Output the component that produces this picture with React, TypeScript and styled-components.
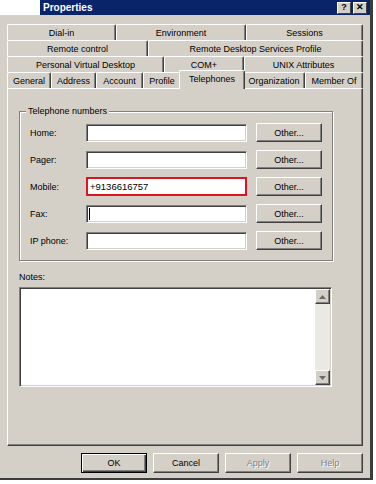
import styled, { createGlobalStyle, css } from 'styled-components';

const face = '#d4d0c8';
const shadow = '#808080';
const dark = '#404040';

const GlobalStyle = createGlobalStyle`
  html, body { margin: 0; padding: 0; background: #fff; }
  body {
    font-family: "Liberation Sans", Arial, sans-serif;
    font-size: 9px;
    color: #000;
  }
  * { box-sizing: border-box; }
`;

type TabDef = { label: string; w: number; active?: boolean };

const tabRows: TabDef[][] = [
  [
    { label: 'Dial-in', w: 109 },
    { label: 'Environment', w: 130 },
    { label: 'Sessions', w: 117 },
  ],
  [
    { label: 'Remote control', w: 141 },
    { label: 'Remote Desktop Services Profile', w: 215 },
  ],
  [
    { label: 'Personal Virtual Desktop', w: 157 },
    { label: 'COM+', w: 80 },
    { label: 'UNIX Attributes', w: 119 },
  ],
  [
    { label: 'General', w: 44 },
    { label: 'Address', w: 45 },
    { label: 'Account', w: 47 },
    { label: 'Profile', w: 38 },
    { label: 'Telephones', w: 62, active: true },
    { label: 'Organization', w: 62 },
    { label: 'Member Of', w: 58 },
  ],
];

const phones = [
  { label: 'Home:', value: '' },
  { label: 'Pager:', value: '' },
  { label: 'Mobile:', value: '+9136616757', alert: true },
  { label: 'Fax:', value: '', caret: true },
  { label: 'IP phone:', value: '' },
];

export default function App() {
  return (
    <>
      <GlobalStyle />
      <Window>
        <TitleRow>
          <Blank />
          <TitleBar>
            <Title>Properties</Title>
            <Caps>
              <CapButton>?</CapButton>
              <CapButton>✕</CapButton>
            </Caps>
          </TitleBar>
        </TitleRow>

        <Frame>
          <Tabs>
            {tabRows.map((row, i) => (
              <TabRow key={i}>
                {row.map((t) => (
                  <Tab key={t.label} $w={t.w} $active={t.active}>
                    {t.label}
                  </Tab>
                ))}
              </TabRow>
            ))}
          </Tabs>

          <Panel>
            <Group>
              <Legend>Telephone numbers</Legend>
              <PhoneList>
                {phones.map((p) => (
                  <PhoneRow key={p.label}>
                    <FieldLabel>{p.label}</FieldLabel>
                    <Field $alert={p.alert}>
                      {p.caret && <Caret />}
                      {p.value}
                    </Field>
                    <OtherButton>Other...</OtherButton>
                  </PhoneRow>
                ))}
              </PhoneList>
            </Group>

            <NotesLabel>Notes:</NotesLabel>
            <Notes>
              <NotesArea />
              <ScrollBar>
                <ScrollButton>
                  <Arrow viewBox="0 0 7 4">
                    <path d="M3.5 0 L7 4 L0 4 Z" />
                  </Arrow>
                </ScrollButton>
                <Track />
                <ScrollButton>
                  <Arrow viewBox="0 0 7 4">
                    <path d="M0 0 L7 0 L3.5 4 Z" />
                  </Arrow>
                </ScrollButton>
              </ScrollBar>
            </Notes>
          </Panel>

          <Buttons>
            <DialogButton $default>OK</DialogButton>
            <DialogButton>Cancel</DialogButton>
            <DialogButton disabled>Apply</DialogButton>
            <DialogButton disabled>Help</DialogButton>
          </Buttons>
        </Frame>
      </Window>
    </>
  );
}

const Window = styled.div`
  width: 373px;
  border-right: 3px solid #3c3c3c;
  border-bottom: 2px solid #3c3c3c;
`;

const TitleRow = styled.div`
  display: flex;
  height: 15px;
`;

const Blank = styled.div`
  width: 40px;
  background: #fff;
`;

const TitleBar = styled.div`
  flex: 1;
  display: flex;
  align-items: center;
  justify-content: space-between;
  padding: 0 3px 0 3px;
  background: #0a246a;
`;

const Title = styled.span`
  color: #fff;
  font-weight: bold;
  font-size: 10px;
  line-height: 15px;
`;

const Caps = styled.div`
  display: flex;
  gap: 2px;
`;

const CapButton = styled.div`
  width: 14px;
  height: 12px;
  display: flex;
  align-items: center;
  justify-content: center;
  background: ${face};
  border: 1px solid;
  border-color: #fff ${dark} ${dark} #fff;
  font-size: 9px;
  font-weight: bold;
  line-height: 9px;
`;

const Frame = styled.div`
  height: 463px;
  display: flex;
  flex-direction: column;
  padding: 9px 7px 5px 7px;
  background: ${face};
`;

const Tabs = styled.div`
  display: flex;
  flex-direction: column;
`;

const TabRow = styled.div`
  display: flex;
  align-items: flex-start;
  height: 16px;
`;

const Tab = styled.div<{ $w: number; $active?: boolean }>`
  width: ${(p) => p.$w}px;
  height: 16px;
  flex: none;
  display: flex;
  align-items: center;
  justify-content: center;
  background: ${face};
  border-top: 1px solid #fff;
  border-left: 1px solid #fff;
  border-right: 1px solid ${dark};
  box-shadow: inset -1px 0 0 ${shadow};
  border-radius: 2px 2px 0 0;
  white-space: nowrap;
  ${(p) =>
    p.$active &&
    css`
      width: ${p.$w + 4}px;
      height: 19px;
      margin: -2px -2px -1px;
      padding-bottom: 2px;
      position: relative;
      z-index: 1;
    `}
`;

const Panel = styled.div`
  height: 358px;
  padding: 22px 11px 0 11px;
  border: 1px solid;
  border-color: #fff ${dark} ${dark} #fff;
  box-shadow: inset -1px -1px 0 ${shadow};
`;

const Group = styled.div`
  width: 314px;
  padding-bottom: 10px;
  border: 1px solid ${shadow};
  box-shadow: inset 1px 1px 0 #fff, 1px 1px 0 #fff;
`;

const Legend = styled.div`
  width: fit-content;
  margin: -7px 0 0 6px;
  padding: 0 2px;
  line-height: 12px;
  background: ${face};
`;

const PhoneList = styled.div`
  display: flex;
  flex-direction: column;
  gap: 8px;
  margin-top: 6px;
`;

const PhoneRow = styled.div`
  display: flex;
  align-items: center;
  height: 19px;
  padding-left: 10px;
`;

const FieldLabel = styled.span`
  width: 56px;
`;

const Field = styled.div<{ $alert?: boolean }>`
  width: 161px;
  height: 18px;
  display: flex;
  align-items: center;
  padding: 0 2px;
  background: #fff;
  font-size: 9.5px;
  border: 1px solid;
  border-color: ${shadow} #fff #fff ${shadow};
  box-shadow: inset 1px 1px 0 ${dark}, inset -1px -1px 0 ${face};
  ${(p) =>
    p.$alert &&
    css`
      height: 19px;
      border: 2px solid #e0141e;
      box-shadow: none;
    `}
`;

const Caret = styled.span`
  width: 1px;
  height: 12px;
  background: #000;
`;

const raised = css`
  background: ${face};
  border: 1px solid;
  border-color: #fff ${dark} ${dark} #fff;
  box-shadow: inset -1px -1px 0 ${shadow};
  font-family: inherit;
  font-size: 9px;
  color: #000;
  padding: 0;
`;

const OtherButton = styled.button`
  ${raised};
  width: 66px;
  height: 19px;
  margin-left: 9px;
`;

const NotesLabel = styled.div`
  margin-top: 10px;
  line-height: 12px;
`;

const Notes = styled.div`
  width: 313px;
  height: 100px;
  margin-top: 4px;
  display: flex;
  background: #fff;
  border: 1px solid;
  border-color: ${shadow} #fff #fff ${shadow};
  box-shadow: inset 1px 1px 0 ${dark}, inset -1px -1px 0 ${face};
  padding: 1px;
`;

const NotesArea = styled.div`
  flex: 1;
`;

const ScrollBar = styled.div`
  width: 15px;
  display: flex;
  flex-direction: column;
  background: #ebe9e4;
`;

const ScrollButton = styled.div`
  ${raised};
  height: 15px;
  display: flex;
  align-items: center;
  justify-content: center;
`;

const Track = styled.div`
  flex: 1;
`;

const Arrow = styled.svg`
  width: 7px;
  height: 4px;
  fill: #6a6a6a;
`;

const Buttons = styled.div`
  display: flex;
  justify-content: flex-end;
  gap: 6px;
  margin-top: 7px;
`;

const DialogButton = styled.button<{ $default?: boolean }>`
  ${raised};
  width: 66px;
  height: 20px;
  &:disabled {
    color: ${shadow};
    text-shadow: 1px 1px 0 #fff;
  }
  ${(p) =>
    p.$default &&
    css`
      border: 1px solid #000;
      box-shadow: inset 1px 1px 0 #fff, inset -1px -1px 0 ${dark},
        inset -2px -2px 0 ${shadow};
    `}
`;
